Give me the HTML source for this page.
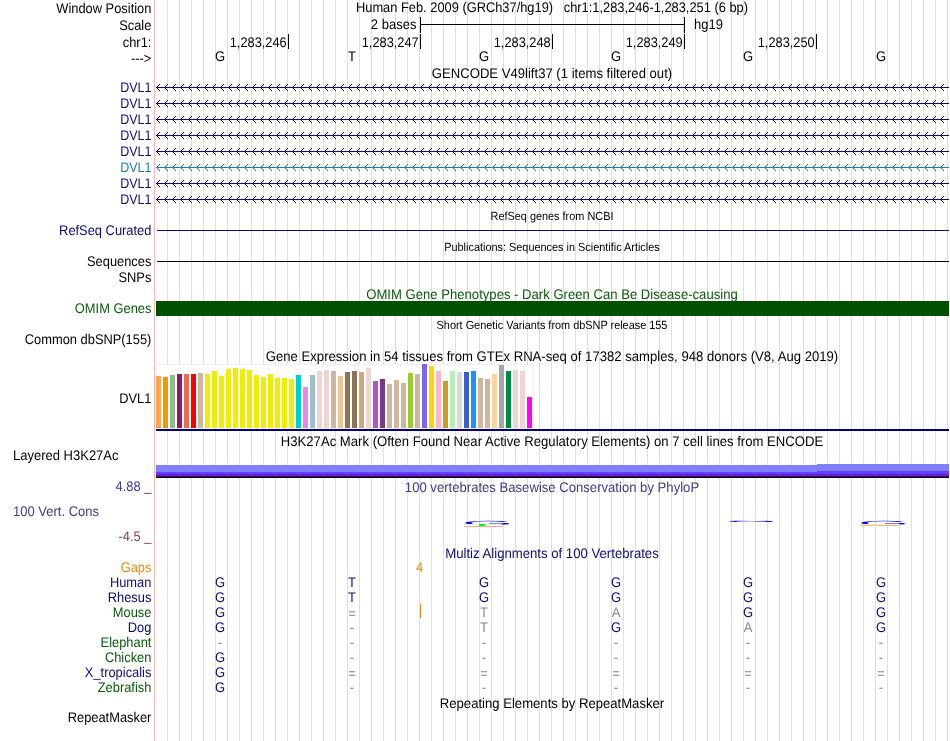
<!DOCTYPE html>
<html lang="en"><head><meta charset="utf-8"><title>UCSC Genome Browser chr1:1,283,246-1,283,251</title>
<style>html,body{margin:0;padding:0;background:#fff;overflow:hidden}svg{display:block;will-change:transform}</style></head>
<body>
<svg width="950" height="741" viewBox="0 0 950 741" font-family='"Liberation Sans", Arial, Helvetica, sans-serif' font-size="13" shape-rendering="crispEdges" text-rendering="geometricPrecision">
<path d="M167.5 0V741M179.5 0V741M191.5 0V741M203.5 0V741M215.5 0V741M227.5 0V741M239.5 0V741M251.5 0V741M263.5 0V741M275.5 0V741M287.5 0V741M299.5 0V741M311.5 0V741M323.5 0V741M335.5 0V741M347.5 0V741M359.5 0V741M371.5 0V741M383.5 0V741M395.5 0V741M407.5 0V741M419.5 0V741M431.5 0V741M443.5 0V741M455.5 0V741M467.5 0V741M479.5 0V741M491.5 0V741M503.5 0V741M515.5 0V741M527.5 0V741M539.5 0V741M551.5 0V741M563.5 0V741M575.5 0V741M587.5 0V741M599.5 0V741M611.5 0V741M623.5 0V741M635.5 0V741M647.5 0V741M659.5 0V741M671.5 0V741M683.5 0V741M695.5 0V741M707.5 0V741M719.5 0V741M731.5 0V741M743.5 0V741M755.5 0V741M767.5 0V741M779.5 0V741M791.5 0V741M803.5 0V741M815.5 0V741M827.5 0V741M839.5 0V741M851.5 0V741M863.5 0V741M875.5 0V741M887.5 0V741M899.5 0V741M911.5 0V741M923.5 0V741M935.5 0V741M947.5 0V741" stroke="#dcdcff" stroke-width="1" fill="none"/>
<rect x="154" y="0" width="1" height="741" fill="#ffb4b4"/>
<text x="151.4" y="13.0" text-anchor="end" fill="#000" font-size="14.0" textLength="95.14" lengthAdjust="spacingAndGlyphs">Window Position</text>
<text x="151.4" y="30.1" text-anchor="end" fill="#000" font-size="14.0" textLength="32.2" lengthAdjust="spacingAndGlyphs">Scale</text>
<text x="151.4" y="47.1" text-anchor="end" fill="#000" font-size="14.0" textLength="28.61" lengthAdjust="spacingAndGlyphs">chr1:</text>
<text x="151.4" y="62.7" text-anchor="end" fill="#000" font-size="14.0" textLength="20.37" lengthAdjust="spacingAndGlyphs">---&gt;</text>
<text x="552" y="11.7" text-anchor="middle" fill="#000" font-size="14.0" textLength="392" lengthAdjust="spacingAndGlyphs">Human Feb. 2009 (GRCh37/hg19)&#160;&#160;&#160;chr1:1,283,246-1,283,251 (6 bp)</text>
<text x="416.4" y="29.2" text-anchor="end" fill="#000" font-size="14.0" textLength="45.53" lengthAdjust="spacingAndGlyphs">2 bases</text>
<text x="694" y="29.2" text-anchor="start" fill="#000" font-size="14.0" textLength="28.92" lengthAdjust="spacingAndGlyphs">hg19</text>
<rect x="420" y="17" width="1" height="16" fill="#000"/>
<rect x="684" y="17" width="1" height="16" fill="#000"/>
<rect x="420" y="24" width="265" height="1" fill="#000"/>
<rect x="288" y="34" width="1" height="15" fill="#000"/>
<text x="286.7" y="46.7" text-anchor="end" fill="#000" font-size="14.0" textLength="56.97" lengthAdjust="spacingAndGlyphs">1,283,246</text>
<rect x="420" y="34" width="1" height="15" fill="#000"/>
<text x="418.7" y="46.7" text-anchor="end" fill="#000" font-size="14.0" textLength="56.97" lengthAdjust="spacingAndGlyphs">1,283,247</text>
<rect x="552" y="34" width="1" height="15" fill="#000"/>
<text x="550.7" y="46.7" text-anchor="end" fill="#000" font-size="14.0" textLength="56.97" lengthAdjust="spacingAndGlyphs">1,283,248</text>
<rect x="684" y="34" width="1" height="15" fill="#000"/>
<text x="682.7" y="46.7" text-anchor="end" fill="#000" font-size="14.0" textLength="56.97" lengthAdjust="spacingAndGlyphs">1,283,249</text>
<rect x="816" y="34" width="1" height="15" fill="#000"/>
<text x="814.7" y="46.7" text-anchor="end" fill="#000" font-size="14.0" textLength="56.97" lengthAdjust="spacingAndGlyphs">1,283,250</text>
<text x="220" y="60.7" text-anchor="middle" fill="#000" font-size="14.0" textLength="10.11" lengthAdjust="spacingAndGlyphs">G</text>
<text x="352" y="60.7" text-anchor="middle" fill="#000" font-size="14.0" textLength="7.94" lengthAdjust="spacingAndGlyphs">T</text>
<text x="484" y="60.7" text-anchor="middle" fill="#000" font-size="14.0" textLength="10.11" lengthAdjust="spacingAndGlyphs">G</text>
<text x="616" y="60.7" text-anchor="middle" fill="#000" font-size="14.0" textLength="10.11" lengthAdjust="spacingAndGlyphs">G</text>
<text x="748" y="60.7" text-anchor="middle" fill="#000" font-size="14.0" textLength="10.11" lengthAdjust="spacingAndGlyphs">G</text>
<text x="881" y="60.7" text-anchor="middle" fill="#000" font-size="14.0" textLength="10.11" lengthAdjust="spacingAndGlyphs">G</text>
<text x="552" y="77.7" text-anchor="middle" fill="#000" font-size="14.0" textLength="240.34" lengthAdjust="spacingAndGlyphs">GENCODE V49lift37 (1 items filtered out)</text>
<defs><pattern id="cv" patternUnits="userSpaceOnUse" x="156" y="4" width="8" height="16"><path d="M0 3h1v1h-1zM1 2h1v1h-1zM2 1h1v1h-1zM3 0h1v1h-1zM1 4h1v1h-1zM2 5h1v1h-1zM3 6h1v1h-1z" fill="#0c0c78"/></pattern><pattern id="cv2" patternUnits="userSpaceOnUse" x="156" y="4" width="8" height="16"><path d="M0 3h1v1h-1zM1 2h1v1h-1zM2 1h1v1h-1zM3 0h1v1h-1zM1 4h1v1h-1zM2 5h1v1h-1zM3 6h1v1h-1z" fill="#1a7cb4"/></pattern></defs>
<text x="151.4" y="91.9" text-anchor="end" fill="#0c0c78" font-size="14.0" textLength="31.22" lengthAdjust="spacingAndGlyphs">DVL1</text>
<rect x="156" y="87" width="793" height="1" fill="#0c0c78"/>
<rect x="156" y="84" width="792" height="7" fill="url(#cv)"/>
<text x="151.4" y="107.9" text-anchor="end" fill="#0c0c78" font-size="14.0" textLength="31.22" lengthAdjust="spacingAndGlyphs">DVL1</text>
<rect x="156" y="103" width="793" height="1" fill="#0c0c78"/>
<rect x="156" y="100" width="792" height="7" fill="url(#cv)"/>
<text x="151.4" y="123.9" text-anchor="end" fill="#0c0c78" font-size="14.0" textLength="31.22" lengthAdjust="spacingAndGlyphs">DVL1</text>
<rect x="156" y="119" width="793" height="1" fill="#0c0c78"/>
<rect x="156" y="116" width="792" height="7" fill="url(#cv)"/>
<text x="151.4" y="139.9" text-anchor="end" fill="#0c0c78" font-size="14.0" textLength="31.22" lengthAdjust="spacingAndGlyphs">DVL1</text>
<rect x="156" y="135" width="793" height="1" fill="#0c0c78"/>
<rect x="156" y="132" width="792" height="7" fill="url(#cv)"/>
<text x="151.4" y="155.9" text-anchor="end" fill="#0c0c78" font-size="14.0" textLength="31.22" lengthAdjust="spacingAndGlyphs">DVL1</text>
<rect x="156" y="151" width="793" height="1" fill="#0c0c78"/>
<rect x="156" y="148" width="792" height="7" fill="url(#cv)"/>
<text x="151.4" y="171.9" text-anchor="end" fill="#1a7cb4" font-size="14.0" textLength="31.22" lengthAdjust="spacingAndGlyphs">DVL1</text>
<rect x="156" y="167" width="793" height="1" fill="#1a7cb4"/>
<rect x="156" y="164" width="792" height="7" fill="url(#cv2)"/>
<text x="151.4" y="187.9" text-anchor="end" fill="#0c0c78" font-size="14.0" textLength="31.22" lengthAdjust="spacingAndGlyphs">DVL1</text>
<rect x="156" y="183" width="793" height="1" fill="#0c0c78"/>
<rect x="156" y="180" width="792" height="7" fill="url(#cv)"/>
<text x="151.4" y="203.9" text-anchor="end" fill="#0c0c78" font-size="14.0" textLength="31.22" lengthAdjust="spacingAndGlyphs">DVL1</text>
<rect x="156" y="199" width="793" height="1" fill="#0c0c78"/>
<rect x="156" y="196" width="792" height="7" fill="url(#cv)"/>
<text x="552" y="219.7" text-anchor="middle" fill="#000" font-size="11.85" textLength="122.88" lengthAdjust="spacingAndGlyphs">RefSeq genes from NCBI</text>
<text x="151.4" y="234.7" text-anchor="end" fill="#0c0c78" font-size="14.0" textLength="92.3" lengthAdjust="spacingAndGlyphs">RefSeq Curated</text>
<rect x="157" y="230" width="792" height="1" fill="#0c0c78"/>
<text x="552" y="250.7" text-anchor="middle" fill="#000" font-size="11.85" textLength="215.51" lengthAdjust="spacingAndGlyphs">Publications: Sequences in Scientific Articles</text>
<text x="151.4" y="265.7" text-anchor="end" fill="#000" font-size="14.0" textLength="64.4" lengthAdjust="spacingAndGlyphs">Sequences</text>
<rect x="157" y="261" width="792" height="1" fill="#000"/>
<text x="151.4" y="281.7" text-anchor="end" fill="#000" font-size="14.0" textLength="32.9" lengthAdjust="spacingAndGlyphs">SNPs</text>
<text x="552" y="298.7" text-anchor="middle" fill="#0a5a0a" font-size="14.0" textLength="371.47" lengthAdjust="spacingAndGlyphs">OMIM Gene Phenotypes - Dark Green Can Be Disease-causing</text>
<text x="151.4" y="312.7" text-anchor="end" fill="#0a5a0a" font-size="14.0" textLength="76.53" lengthAdjust="spacingAndGlyphs">OMIM Genes</text>
<rect x="156" y="301" width="793" height="15" fill="#005000"/>
<text x="552" y="328.7" text-anchor="middle" fill="#000" font-size="11.85" textLength="230.84" lengthAdjust="spacingAndGlyphs">Short Genetic Variants from dbSNP release 155</text>
<text x="151.4" y="343.7" text-anchor="end" fill="#000" font-size="14.0" textLength="126.61" lengthAdjust="spacingAndGlyphs">Common dbSNP(155)</text>
<text x="552" y="360.7" text-anchor="middle" fill="#000" font-size="14.0" textLength="572.38" lengthAdjust="spacingAndGlyphs">Gene Expression in 54 tissues from GTEx RNA-seq of 17382 samples, 948 donors (V8, Aug 2019)</text>
<text x="151.4" y="402.7" text-anchor="end" fill="#000" font-size="14.0" textLength="32.2" lengthAdjust="spacingAndGlyphs">DVL1</text>
<rect x="156" y="364" width="378" height="65" fill="#f0f0f0"/>
<rect x="157" y="365" width="376" height="63" fill="#fff"/>
<rect x="156" y="376" width="5" height="52" fill="#FFA54F"/>
<rect x="163" y="377" width="5" height="51" fill="#EE9A00"/>
<rect x="170" y="375" width="5" height="53" fill="#8FBC8F"/>
<rect x="177" y="374" width="5" height="54" fill="#8B1C62"/>
<rect x="184" y="374" width="5" height="54" fill="#EE6A50"/>
<rect x="191" y="374" width="5" height="54" fill="#FF0000"/>
<rect x="198" y="373" width="5" height="55" fill="#CDB79E"/>
<rect x="205" y="374" width="5" height="54" fill="#EEEE00"/>
<rect x="212" y="371" width="5" height="57" fill="#EEEE00"/>
<rect x="219" y="376" width="5" height="52" fill="#EEEE00"/>
<rect x="226" y="369" width="5" height="59" fill="#EEEE00"/>
<rect x="233" y="368" width="5" height="60" fill="#EEEE00"/>
<rect x="240" y="369" width="5" height="59" fill="#EEEE00"/>
<rect x="247" y="370" width="5" height="58" fill="#EEEE00"/>
<rect x="254" y="375" width="5" height="53" fill="#EEEE00"/>
<rect x="261" y="377" width="5" height="51" fill="#EEEE00"/>
<rect x="268" y="374" width="5" height="54" fill="#EEEE00"/>
<rect x="275" y="378" width="5" height="50" fill="#EEEE00"/>
<rect x="282" y="378" width="5" height="50" fill="#EEEE00"/>
<rect x="289" y="379" width="5" height="49" fill="#EEEE00"/>
<rect x="296" y="375" width="5" height="53" fill="#00CDCD"/>
<rect x="303" y="387" width="5" height="41" fill="#EE82EE"/>
<rect x="310" y="375" width="5" height="53" fill="#9AC0CD"/>
<rect x="317" y="371" width="5" height="57" fill="#EED5D2"/>
<rect x="324" y="370" width="5" height="58" fill="#EED5D2"/>
<rect x="331" y="371" width="5" height="57" fill="#CDB79E"/>
<rect x="338" y="376" width="5" height="52" fill="#EEC591"/>
<rect x="345" y="372" width="5" height="56" fill="#8B7355"/>
<rect x="352" y="371" width="5" height="57" fill="#8B7355"/>
<rect x="359" y="372" width="5" height="56" fill="#CDAA7D"/>
<rect x="366" y="368" width="5" height="60" fill="#EED5D2"/>
<rect x="373" y="381" width="5" height="47" fill="#B452CD"/>
<rect x="380" y="379" width="5" height="49" fill="#7A378B"/>
<rect x="387" y="384" width="5" height="44" fill="#CDB79E"/>
<rect x="394" y="380" width="5" height="48" fill="#CDB79E"/>
<rect x="401" y="383" width="5" height="45" fill="#CDB79E"/>
<rect x="408" y="373" width="5" height="55" fill="#9ACD32"/>
<rect x="415" y="374" width="5" height="54" fill="#CDB79E"/>
<rect x="422" y="364" width="5" height="64" fill="#7A67EE"/>
<rect x="429" y="366" width="5" height="62" fill="#FFD700"/>
<rect x="436" y="371" width="5" height="57" fill="#FFB6C1"/>
<rect x="443" y="381" width="5" height="47" fill="#CD9B1D"/>
<rect x="450" y="371" width="5" height="57" fill="#B4EEB4"/>
<rect x="457" y="372" width="5" height="56" fill="#D9D9D9"/>
<rect x="464" y="372" width="5" height="56" fill="#3A5FCD"/>
<rect x="471" y="371" width="5" height="57" fill="#1E90FF"/>
<rect x="478" y="378" width="5" height="50" fill="#CDB79E"/>
<rect x="485" y="379" width="5" height="49" fill="#CDB79E"/>
<rect x="492" y="374" width="5" height="54" fill="#FFD39B"/>
<rect x="499" y="365" width="5" height="63" fill="#A6A6A6"/>
<rect x="506" y="371" width="5" height="57" fill="#008B45"/>
<rect x="513" y="370" width="5" height="58" fill="#EED5D2"/>
<rect x="520" y="371" width="5" height="57" fill="#EED5D2"/>
<rect x="527" y="397" width="5" height="31" fill="#FF00FF"/>
<rect x="156" y="429" width="793" height="2" fill="#000078"/>
<text x="552" y="445.7" text-anchor="middle" fill="#000" font-size="14.0" textLength="542.41" lengthAdjust="spacingAndGlyphs">H3K27Ac Mark (Often Found Near Active Regulatory Elements) on 7 cell lines from ENCODE</text>
<text x="13" y="459.7" text-anchor="start" fill="#000" font-size="14.0" textLength="105.52" lengthAdjust="spacingAndGlyphs">Layered H3K27Ac</text>
<rect x="156" y="465" width="661" height="7" fill="#8080ff"/>
<rect x="817" y="464" width="132" height="7" fill="#8080ff"/>
<rect x="156" y="472" width="661" height="2" fill="#6040ff"/>
<rect x="817" y="471" width="132" height="3" fill="#6040ff"/>
<rect x="156" y="474" width="793" height="2" fill="#6a20d0"/>
<rect x="156" y="476" width="793" height="1" fill="#351562"/>
<rect x="156" y="477" width="793" height="1" fill="#0c0018"/>
<text x="151.4" y="490.7" text-anchor="end" fill="#3c3ca0" font-size="14.0" textLength="35.79" lengthAdjust="spacingAndGlyphs">4.88 _</text>
<text x="552" y="491.7" text-anchor="middle" fill="#3c3c8c" font-size="14.0" textLength="294.29" lengthAdjust="spacingAndGlyphs">100 vertebrates Basewise Conservation by PhyloP</text>
<text x="13" y="515.7" text-anchor="start" fill="#3c3c8c" font-size="14.0" textLength="86.0" lengthAdjust="spacingAndGlyphs">100 Vert. Cons</text>
<text x="151.4" y="540.7" text-anchor="end" fill="#8c3c3c" font-size="14.0" textLength="32.91" lengthAdjust="spacingAndGlyphs">-4.5 _</text>
<text transform="matrix(0.6663 0 0 0.0593 461.65 524.54)" font-size="100" fill="#0000ff" opacity="1">G</text>
<rect x="463" y="524" width="38" height="1" fill="#d4ffd4"/>
<rect x="479" y="524" width="6" height="2" fill="#00ff00"/>
<rect x="464" y="526" width="39" height="1" fill="#ffa0a0"/>
<rect x="734" y="521" width="32" height="1" fill="#c4c4ff"/>
<rect x="765" y="521" width="7" height="1" fill="#3030ff"/>
<text transform="matrix(0.6663 0 0 0.0198 725.65 521.98)" font-size="100" fill="#0000ff" opacity="0.9">G</text>
<text transform="matrix(0.6663 0 0 0.0593 857.65 524.54)" font-size="100" fill="#0000ff" opacity="1">G</text>
<rect x="862" y="524" width="38" height="1" fill="#f4f49c"/>
<rect x="860" y="525" width="40" height="1" fill="#ffb0b0"/>
<text x="552" y="557.7" text-anchor="middle" fill="#0c0c78" font-size="14.0" textLength="213.55" lengthAdjust="spacingAndGlyphs">Multiz Alignments of 100 Vertebrates</text>
<text x="151.4" y="571.7" text-anchor="end" fill="#e68a14" font-size="14.0" textLength="30.76" lengthAdjust="spacingAndGlyphs">Gaps</text>
<text x="419.5" y="571.7" text-anchor="middle" fill="#e68a14" font-size="14.0" textLength="7.23" lengthAdjust="spacingAndGlyphs">4</text>
<rect x="420" y="604" width="1" height="14" fill="#e68a14"/>
<text x="151.4" y="586.7" text-anchor="end" fill="#0c0c78" font-size="14.0" textLength="41.49" lengthAdjust="spacingAndGlyphs">Human</text>
<text x="220" y="586.7" text-anchor="middle" fill="#0c0c78" font-size="14.0" textLength="10.11" lengthAdjust="spacingAndGlyphs">G</text>
<text x="352" y="586.7" text-anchor="middle" fill="#0c0c78" font-size="14.0" textLength="7.94" lengthAdjust="spacingAndGlyphs">T</text>
<text x="484" y="586.7" text-anchor="middle" fill="#0c0c78" font-size="14.0" textLength="10.11" lengthAdjust="spacingAndGlyphs">G</text>
<text x="616" y="586.7" text-anchor="middle" fill="#0c0c78" font-size="14.0" textLength="10.11" lengthAdjust="spacingAndGlyphs">G</text>
<text x="748" y="586.7" text-anchor="middle" fill="#0c0c78" font-size="14.0" textLength="10.11" lengthAdjust="spacingAndGlyphs">G</text>
<text x="881" y="586.7" text-anchor="middle" fill="#0c0c78" font-size="14.0" textLength="10.11" lengthAdjust="spacingAndGlyphs">G</text>
<text x="151.4" y="601.7" text-anchor="end" fill="#0c0c78" font-size="14.0" textLength="43.64" lengthAdjust="spacingAndGlyphs">Rhesus</text>
<text x="220" y="601.7" text-anchor="middle" fill="#0c0c78" font-size="14.0" textLength="10.11" lengthAdjust="spacingAndGlyphs">G</text>
<text x="352" y="601.7" text-anchor="middle" fill="#0c0c78" font-size="14.0" textLength="7.94" lengthAdjust="spacingAndGlyphs">T</text>
<text x="484" y="601.7" text-anchor="middle" fill="#0c0c78" font-size="14.0" textLength="10.11" lengthAdjust="spacingAndGlyphs">G</text>
<text x="616" y="601.7" text-anchor="middle" fill="#0c0c78" font-size="14.0" textLength="10.11" lengthAdjust="spacingAndGlyphs">G</text>
<text x="748" y="601.7" text-anchor="middle" fill="#0c0c78" font-size="14.0" textLength="10.11" lengthAdjust="spacingAndGlyphs">G</text>
<text x="881" y="601.7" text-anchor="middle" fill="#0c0c78" font-size="14.0" textLength="10.11" lengthAdjust="spacingAndGlyphs">G</text>
<text x="151.4" y="616.7" text-anchor="end" fill="#0a5a0a" font-size="14.0" textLength="38.63" lengthAdjust="spacingAndGlyphs">Mouse</text>
<text x="220" y="616.7" text-anchor="middle" fill="#0c0c78" font-size="14.0" textLength="10.11" lengthAdjust="spacingAndGlyphs">G</text>
<text x="352" y="618.2" text-anchor="middle" fill="#8484ac" font-size="14.0" textLength="7.59" lengthAdjust="spacingAndGlyphs">=</text>
<text x="484" y="616.7" text-anchor="middle" fill="#8484ac" font-size="14.0" textLength="7.94" lengthAdjust="spacingAndGlyphs">T</text>
<text x="616" y="616.7" text-anchor="middle" fill="#8484ac" font-size="14.0" textLength="8.67" lengthAdjust="spacingAndGlyphs">A</text>
<text x="748" y="616.7" text-anchor="middle" fill="#0c0c78" font-size="14.0" textLength="10.11" lengthAdjust="spacingAndGlyphs">G</text>
<text x="881" y="616.7" text-anchor="middle" fill="#0c0c78" font-size="14.0" textLength="10.11" lengthAdjust="spacingAndGlyphs">G</text>
<text x="151.4" y="631.7" text-anchor="end" fill="#0c0c78" font-size="14.0" textLength="23.61" lengthAdjust="spacingAndGlyphs">Dog</text>
<text x="220" y="631.7" text-anchor="middle" fill="#0c0c78" font-size="14.0" textLength="10.11" lengthAdjust="spacingAndGlyphs">G</text>
<text x="352" y="632.0" text-anchor="middle" fill="#8484ac" font-size="14.0" textLength="4.33" lengthAdjust="spacingAndGlyphs">-</text>
<text x="484" y="631.7" text-anchor="middle" fill="#8484ac" font-size="14.0" textLength="7.94" lengthAdjust="spacingAndGlyphs">T</text>
<text x="616" y="631.7" text-anchor="middle" fill="#0c0c78" font-size="14.0" textLength="10.11" lengthAdjust="spacingAndGlyphs">G</text>
<text x="748" y="631.7" text-anchor="middle" fill="#8484ac" font-size="14.0" textLength="8.67" lengthAdjust="spacingAndGlyphs">A</text>
<text x="881" y="631.7" text-anchor="middle" fill="#0c0c78" font-size="14.0" textLength="10.11" lengthAdjust="spacingAndGlyphs">G</text>
<text x="151.4" y="646.7" text-anchor="end" fill="#0a5a0a" font-size="14.0" textLength="50.81" lengthAdjust="spacingAndGlyphs">Elephant</text>
<text x="220" y="647.0" text-anchor="middle" fill="#8484ac" font-size="14.0" textLength="4.33" lengthAdjust="spacingAndGlyphs">-</text>
<text x="352" y="647.0" text-anchor="middle" fill="#8484ac" font-size="14.0" textLength="4.33" lengthAdjust="spacingAndGlyphs">-</text>
<text x="484" y="647.0" text-anchor="middle" fill="#8484ac" font-size="14.0" textLength="4.33" lengthAdjust="spacingAndGlyphs">-</text>
<text x="616" y="647.0" text-anchor="middle" fill="#8484ac" font-size="14.0" textLength="4.33" lengthAdjust="spacingAndGlyphs">-</text>
<text x="748" y="647.0" text-anchor="middle" fill="#8484ac" font-size="14.0" textLength="4.33" lengthAdjust="spacingAndGlyphs">-</text>
<text x="881" y="647.0" text-anchor="middle" fill="#8484ac" font-size="14.0" textLength="4.33" lengthAdjust="spacingAndGlyphs">-</text>
<text x="151.4" y="661.7" text-anchor="end" fill="#0a5a0a" font-size="14.0" textLength="46.5" lengthAdjust="spacingAndGlyphs">Chicken</text>
<text x="220" y="661.7" text-anchor="middle" fill="#0c0c78" font-size="14.0" textLength="10.11" lengthAdjust="spacingAndGlyphs">G</text>
<text x="352" y="662.0" text-anchor="middle" fill="#8484ac" font-size="14.0" textLength="4.33" lengthAdjust="spacingAndGlyphs">-</text>
<text x="484" y="662.0" text-anchor="middle" fill="#8484ac" font-size="14.0" textLength="4.33" lengthAdjust="spacingAndGlyphs">-</text>
<text x="616" y="662.0" text-anchor="middle" fill="#8484ac" font-size="14.0" textLength="4.33" lengthAdjust="spacingAndGlyphs">-</text>
<text x="748" y="662.0" text-anchor="middle" fill="#8484ac" font-size="14.0" textLength="4.33" lengthAdjust="spacingAndGlyphs">-</text>
<text x="881" y="662.0" text-anchor="middle" fill="#8484ac" font-size="14.0" textLength="4.33" lengthAdjust="spacingAndGlyphs">-</text>
<text x="151.4" y="676.7" text-anchor="end" fill="#0c0c78" font-size="14.0" textLength="66.53" lengthAdjust="spacingAndGlyphs">X_tropicalis</text>
<text x="220" y="676.7" text-anchor="middle" fill="#0c0c78" font-size="14.0" textLength="10.11" lengthAdjust="spacingAndGlyphs">G</text>
<text x="352" y="678.2" text-anchor="middle" fill="#8484ac" font-size="14.0" textLength="7.59" lengthAdjust="spacingAndGlyphs">=</text>
<text x="484" y="678.2" text-anchor="middle" fill="#8484ac" font-size="14.0" textLength="7.59" lengthAdjust="spacingAndGlyphs">=</text>
<text x="616" y="678.2" text-anchor="middle" fill="#8484ac" font-size="14.0" textLength="7.59" lengthAdjust="spacingAndGlyphs">=</text>
<text x="748" y="678.2" text-anchor="middle" fill="#8484ac" font-size="14.0" textLength="7.59" lengthAdjust="spacingAndGlyphs">=</text>
<text x="881" y="678.2" text-anchor="middle" fill="#8484ac" font-size="14.0" textLength="7.59" lengthAdjust="spacingAndGlyphs">=</text>
<text x="151.4" y="691.7" text-anchor="end" fill="#0a5a0a" font-size="14.0" textLength="53.65" lengthAdjust="spacingAndGlyphs">Zebrafish</text>
<text x="220" y="691.7" text-anchor="middle" fill="#0c0c78" font-size="14.0" textLength="10.11" lengthAdjust="spacingAndGlyphs">G</text>
<text x="352" y="692.0" text-anchor="middle" fill="#8484ac" font-size="14.0" textLength="4.33" lengthAdjust="spacingAndGlyphs">-</text>
<text x="484" y="692.0" text-anchor="middle" fill="#8484ac" font-size="14.0" textLength="4.33" lengthAdjust="spacingAndGlyphs">-</text>
<text x="616" y="692.0" text-anchor="middle" fill="#8484ac" font-size="14.0" textLength="4.33" lengthAdjust="spacingAndGlyphs">-</text>
<text x="748" y="692.0" text-anchor="middle" fill="#8484ac" font-size="14.0" textLength="4.33" lengthAdjust="spacingAndGlyphs">-</text>
<text x="881" y="692.0" text-anchor="middle" fill="#8484ac" font-size="14.0" textLength="4.33" lengthAdjust="spacingAndGlyphs">-</text>
<text x="552" y="707.7" text-anchor="middle" fill="#000" font-size="14.0" textLength="224.35" lengthAdjust="spacingAndGlyphs">Repeating Elements by RepeatMasker</text>
<text x="151.4" y="721.7" text-anchor="end" fill="#000" font-size="14.0" textLength="83.7" lengthAdjust="spacingAndGlyphs">RepeatMasker</text>
</svg>
</body></html>
